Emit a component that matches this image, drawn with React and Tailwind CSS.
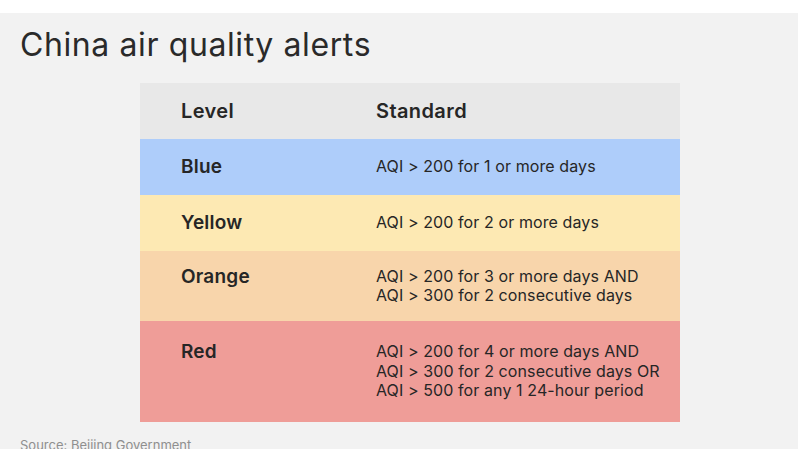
const rows = [
  { level: 'Blue', bg: 'bg-[#aecdfa]', h: 'h-[56px]', lines: ['AQI > 200 for 1 or more days'] },
  { level: 'Yellow', bg: 'bg-[#fde9b3]', h: 'h-[56px]', lines: ['AQI > 200 for 2 or more days'] },
  {
    level: 'Orange',
    bg: 'bg-[#f8d5ab]',
    h: 'h-[70px]',
    lines: ['AQI > 200 for 3 or more days AND', 'AQI > 300 for 2 consecutive days'],
  },
  {
    level: 'Red',
    bg: 'bg-[#ef9d98]',
    h: 'h-[101px]',
    lines: [
      'AQI > 200 for 4 or more days AND',
      'AQI > 300 for 2 consecutive days OR',
      'AQI > 500 for any 1 24-hour period',
    ],
  },
];

export default function App() {
  return (
    <div className="w-[798px] h-[449px] overflow-hidden bg-white font-['Inter',sans-serif] text-[#262626]">
      <div className="mt-[13px] h-[436px] bg-[#f2f2f2]">
        {/* 제목 */}
        <h1 className="pl-[20px] pt-[13px] text-[32px] leading-[38px] font-normal tracking-[0.6px] text-[#2a2a2a]">
          China air quality alerts
        </h1>

        {/* 표 */}
        <div className="mt-[19px] ml-[140px] w-[540px]">
          <div className="h-[56px] bg-[#e8e8e8] flex items-center text-[20px] font-semibold tracking-[0.4px]">
            <div className="w-[236px] pl-[41px]">Level</div>
            <div>Standard</div>
          </div>
          {rows.map((row) => (
            <div key={row.level} className={`${row.bg} ${row.h} flex items-center`}>
              <div className="flex items-start w-full">
                <div className="w-[236px] pl-[41px] text-[19px] leading-[20px] font-semibold tracking-[0.2px]">
                  {row.level}
                </div>
                <div className="text-[16px] leading-[19.5px] tracking-[0.1px]">
                  {row.lines.map((l) => (
                    <div key={l}>{l}</div>
                  ))}
                </div>
              </div>
            </div>
          ))}
        </div>

        <div className="pl-[20px] pt-[16px] text-[13px] leading-[14px] text-[#8f8f8f]">
          Source: Beijing Government
        </div>
      </div>
    </div>
  );
}
